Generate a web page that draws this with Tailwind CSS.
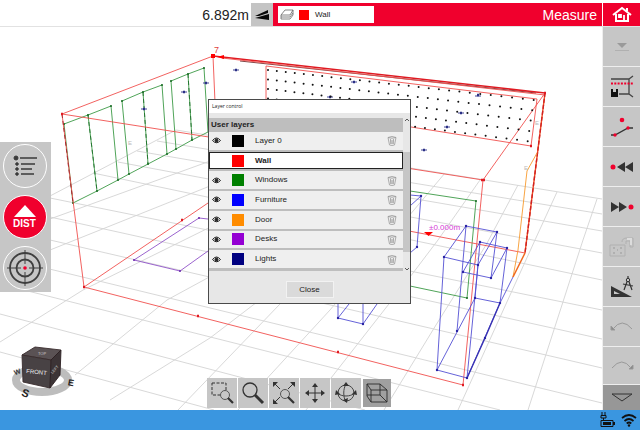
<!DOCTYPE html>
<html lang="en">
<head>
    <meta charset="UTF-8">
    <meta name="viewport" content="width=device-width, initial-scale=1">
    <title>Measure</title>
    <script src="https://cdn.jsdelivr.net/npm/@tailwindcss/browser@4"></script>
</head>
<body class="flex h-screen flex-col overflow-hidden bg-white font-['Liberation_Sans',sans-serif] text-[#222]">

    <!-- Header -->
    <header class="flex h-[27px] shrink-0 border-b border-[#e2e2e2] pt-[3px]">
        <div class="flex w-[251px] items-center justify-end pr-[2px] text-[14px] leading-none">6.892m</div>
        <button class="flex w-[22px] items-center justify-center bg-[#c4c4c4]" aria-label="Slope">
            <svg class="h-[12px] w-[16px]" viewBox="0 0 16 12"><path d="M1 7 14 1v3L5 7zM1 9l14-4v6z" fill="#080808"/></svg>
        </button>
        <div class="flex min-w-0 flex-1 items-center justify-between bg-[#f0002d] pr-[5px] pl-[5px]">
            <button class="flex h-[17px] w-[96px] items-center bg-white pl-[2px] text-[8px] leading-none">
                <svg class="h-[12px] w-[14px]" viewBox="0 0 14 12" fill="none" stroke="#666" stroke-width=".8"><path d="M1 6 5 1h8l-3 5zM1 6v4h9l3-4V1M1 8h9l3-4"/></svg>
                <span class="ml-[5px] size-[10px] bg-[#f00]"></span>
                <span class="ml-[6px]">Wall</span>
            </button>
            <h1 class="text-[14px] leading-none text-white">Measure</h1>
        </div>
        <button class="flex w-[38px] items-center justify-center border-l border-white bg-[#f0002d]" aria-label="Home">
            <svg class="h-[17px] w-[20px]" viewBox="0 0 20 17" fill="none" stroke="#fff" stroke-width="2"><path d="M1 9 10 2l9 7M4 8v7h12V8M15 5V2"/><path d="M7 9h2v2H7zM12 9v6" stroke-width="1.8"/></svg>
        </button>
    </header>

    <main class="flex min-h-0 flex-1">
        <div class="relative min-w-0 flex-1 overflow-hidden">

            <!-- 3D view -->
            <svg class="block h-full w-full" viewBox="0 27 602 383" preserveAspectRatio="xMinYMin slice" fill="none" stroke-width=".9">
                <path stroke="#d4d4d4" d="M176 130 602 199M157 141 602 214M137 151 602 231M118 162 602 253M93 173 602 280M50 198 602 310M50 217 602 339M50 240 602 368M0 257 602 403M0 284 500 410M0 314 365 410M0 352 214 410
                    M50 196 176 130M50 219 260 143M50 250 300 150M0 342 83 290 350 158M75 375 167 300 410 168M110 400 210 338 410 185M178 410 280 304 412 168M238 410 330 310 445 173M306 410 410 277 438 240 480 180M384 410 436 325 486 245 518 185M458 410 535 240 557 192M528 410 583 240 597 199"/>
                <!-- windows -->
                <path stroke="#3c9a46" d="M64 124 88 115 111 106 118 180M88 115 97 191M64 124 73 203 97 191 118 180 129 174 148 164 167 154 176 149 192 140 208 132M122 101 143 92 162 85 167 154M122 101 129 174M143 92 148 164M171 81 188 74 204 68 208 132M171 81 176 149M188 74 192 140M410 191 476 201 467 298 410 286"/>
                <path stroke="#1f6f2b" stroke-dasharray="4 3" d="M88 115 97 191M143 92 148 164M188 74 192 140"/>
                <path stroke="#1f6f2b" stroke-width="2.2" stroke-linecap="round" d="M64 124h0M88 115h0M111 106h0M122 101h0M143 92h0M162 85h0M171 81h0M188 74h0M204 68h0M73 203h0M97 191h0M118 180h0M129 174h0M148 164h0M167 154h0M176 149h0M192 140h0M476 201h0M467 298h0"/>
                <!-- walls -->
                <path stroke="#f0504e" d="M62 114 213 56M62 114 483 180 545 93M62 114 84 287 463 385 483 180M84 287 208 203 219 195 525 253M213 56 219 195M266 66V104L531 146 537 99 266 66"/>
                <path stroke="#a4232b" stroke-dasharray="4 3" d="M62 114 73 203"/>
                <path stroke="#6b3030" d="M240 61 536 93"/>
                <path stroke="#e01a22" stroke-width="1.5" d="M213 56 545 93"/>
                <path stroke="#f0504e" d="M222 58 545 95"/>
                <path stroke="#f04a20" stroke-width="1.4" d="M545 93 525 253"/>
                <path stroke="#d02020" stroke-width="1.4" stroke-dasharray="4 2" d="M545 93 525 253"/>
                <path stroke="#e01a22" stroke-width="2.4" d="M61 114h2M83 287h2M181 220h2M197 316h2M337 352h2M462 385h2M481 180h4M530 146h2M544 93h2"/>
                <path fill="#f00" d="M211 54h4v4h-4zM217 57l7-2v4zM424 232h9l-4.5 4z"/>
                <!-- door -->
                <path stroke="#f79a2e" d="M537 153 527 171 518 250 513 277"/>
                <path stroke="#f06a20" stroke-width="1.5" d="M525 253 513 277"/>
                <!-- desks -->
                <path stroke="#9052c8" d="M208 219 199 218 134 260 180 271 208 251"/>
                <path stroke="#7030b0" stroke-width="2.2" stroke-linecap="round" d="M199 218h0M134 260h0M180 271h0"/>
                <!-- furniture -->
                <path stroke="#5450d4" d="M444 257 478 265 497 232 466 226 444 257 437 370 467 378 478 265M466 226 457 331M497 232 491 278 463 272 480 242 507 248 491 278M480 242 475 298 500 303 507 248M437 370 475 298M467 378 500 303 513 277M410 195 421 196 417 247 410 253M421 196 410 206M338 300V318L363 324V300M338 318 349 304M363 324 377 304"/>
                <path stroke="#3a34b4" stroke-width="1.4" d="M467 378 485 338 500 303"/>
                <path stroke="#2a24a4" stroke-width="2.4" stroke-linecap="round" d="M444 257h0M478 265h0M497 232h0M466 226h0M437 370h0M467 378h0M457 331h0M491 278h0M463 272h0M480 242h0M507 248h0M475 298h0M500 303h0M485 338h0M421 196h0M417 247h0M338 318h0M363 324h0"/>
                <!-- lights -->
                <path stroke="#2a2f86" d="M233 70h6M203 83h6M351 82h6M327 97h6M475 96h6M458 113h6M444 127h6M421 150h6M181 92h6M141 109h6"/>
                <path stroke="#2a2f86" stroke-width="2.6" d="M235 70h2M205 83h2M353 82h2M329 97h2M477 95h2M460 113h2M446 127h2M423 150h2M183 92h2M143 109h2"/>
                <g id="dots" fill="#111"></g>
                <g fill="#bbb" font-size="6"><text x="128" y="145">E</text><text x="535" y="125">E</text><text x="524" y="170">E</text></g>
                <text x="214" y="53" font-size="9" fill="#e0433f">7</text>
                <text x="429" y="230" font-size="8" fill="#d63ad6">±0.000m</text>

                <!-- view cube -->
                <ellipse cx="42" cy="380" rx="26" ry="12" stroke="#bdbdbd" stroke-width="8"/>
                <path fill="#5a5254" stroke="#3a2c2e" d="M22 355 35 347 61 350 51 360z"/>
                <path fill="#484244" stroke="#3a2c2e" d="M22 355 51 360 50 388 23 382z"/>
                <path fill="#3c3436" stroke="#2c2022" d="M51 360 61 350 60 375 50 388z"/>
                <text transform="rotate(6 26 373)" x="26" y="373" font-size="6" fill="#eee">FRONT</text>
                <text x="38" y="355" font-size="4" fill="#ccc">TOP</text>
                <text transform="rotate(-50 54 374)" x="53" y="373" font-size="4" fill="#ccc">LEFT</text>
                <text transform="rotate(-20 18 372)" x="14" y="374" font-size="7" font-weight="bold" fill="#333">W</text>
                <text transform="rotate(20 26 393)" x="22" y="397" font-size="11" font-weight="bold" fill="#222">S</text>
                <text transform="rotate(10 72 383)" x="68" y="386" font-size="9" font-weight="bold" fill="#222">E</text>
            </svg>

            <!-- Left tools -->
            <nav class="absolute top-[115px] left-0 flex w-[51px] flex-col items-center gap-[7px] bg-[#c6c6c6] py-[2px] pr-[2px]">
                <button class="flex size-[44px] items-center justify-center rounded-full border border-white" aria-label="List">
                    <svg class="h-[22px] w-[26px]" viewBox="0 0 26 22" fill="#3a3a3a" stroke="#3a3a3a"><circle cx="4" cy="3" r="2"/><circle cx="5" cy="9" r="1.3"/><circle cx="5" cy="14" r="1.3"/><circle cx="5" cy="19" r="1.3"/><path stroke-width="1.6" d="M8 3h17M9 9h14M9 14h11M9 19h13"/></svg>
                </button>
                <button class="flex size-[44px] flex-col items-center justify-center gap-[2px] rounded-full border border-white bg-[#f0002d] text-[10px] leading-none font-bold text-white">
                    <svg class="h-[12px] w-[22px]" viewBox="0 0 22 12" fill="#fff"><path d="M11 0 22 12H0z"/></svg>
                    DIST
                </button>
                <button class="flex size-[44px] items-center justify-center rounded-full border border-white" aria-label="Target">
                    <svg class="size-[36px]" viewBox="0 0 36 36" fill="none" stroke="#3f3f3f"><circle cx="18" cy="18" r="15" stroke-width="1.8"/><circle cx="18" cy="18" r="8.5" stroke-width="1.8"/><path d="M18 0v14M18 22v14M0 18h14M22 18h14"/><circle cx="18" cy="18" r="1.8" fill="#f0002d" stroke="none"/></svg>
                </button>
            </nav>

            <!-- Layer control -->
            <section class="absolute top-[72px] left-[208px] w-[203px] border border-[#4a4a4a] bg-[#e7e7e7]" role="dialog" aria-labelledby="dialog-title">
                <h2 id="dialog-title" class="h-[13px] bg-white pl-[3px] font-['Open_Sans',sans-serif] text-[5px] leading-[12px]">Layer control</h2>
                <div class="mt-[5px] flex">
                    <div class="min-w-0 flex-1 bg-[#bebebe] pb-[3px]">
                        <h3 class="pl-[2px] text-[8px] leading-[14px] font-bold">User layers</h3>
                        <ul id="layers" class="grid h-[136px] auto-rows-fr gap-[2px]"></ul>
                    </div>
                    <div class="flex w-[7px] flex-col items-center">
                        <svg class="size-[4px]" viewBox="0 0 4 4" fill="none" stroke="#333" stroke-width=".8"><path d="M0 3 2 1l2 2"/></svg>
                        <div class="mt-[30px] w-full grow bg-[#c6c6c6]"></div>
                        <svg class="mt-[15px] size-[4px]" viewBox="0 0 4 4" fill="none" stroke="#333" stroke-width=".8"><path d="M0 1l2 2 2-2"/></svg>
                    </div>
                </div>
                <div class="flex justify-center pt-[10px] pb-[5px]">
                    <button class="h-[17px] w-[48px] border border-[#f2f2f2] bg-[#dadada] text-[8px] leading-none">Close</button>
                </div>
            </section>

            <!-- View tools -->
            <nav class="absolute bottom-[2px] left-[207px] flex items-center gap-px">
                <button class="flex size-[30px] items-center justify-center bg-[#c6c6c6]" aria-label="Zoom window">
                    <svg class="size-[24px]" viewBox="0 0 24 24" fill="none" stroke="#333"><path stroke-dasharray="3 1.5" d="M2 2h14v12H2z"/><circle cx="15" cy="14" r="4.500" fill="#c6c6c6" stroke="#555"/><path d="m18 17 5 5" stroke-width="2.2"/></svg>
                </button>
                <button class="flex size-[30px] items-center justify-center bg-[#c6c6c6]" aria-label="Zoom">
                    <svg class="size-[24px]" viewBox="0 0 24 24" fill="none" stroke="#333"><circle cx="9" cy="9" r="7" stroke-width="1.3"/><path d="m14 14 8 8" stroke-width="3"/></svg>
                </button>
                <button class="flex size-[30px] items-center justify-center bg-[#c6c6c6]" aria-label="Zoom extents">
                    <svg class="size-[24px]" viewBox="0 0 24 24" fill="none" stroke="#333"><path d="m2 2 6 6M22 2l-6 6M2 22l6-6"/><circle cx="13" cy="13" r="4.5" stroke="#555"/><path d="m16 16 6 6" stroke-width="2.2"/><path stroke="none" fill="#333" d="M1 1h5L1 6zM23 1h-5l5 5zM1 23v-5l5 5z"/></svg>
                </button>
                <button class="flex size-[30px] items-center justify-center bg-[#c6c6c6]" aria-label="Pan">
                    <svg class="size-[24px]" viewBox="0 0 24 24" fill="#333" stroke="#333"><path d="M12 4v16M4 12h16"/><path stroke="none" d="m12 2 3 4H9zM12 22l3-4H9zM2 12l4-3v6zM22 12l-4-3v6z"/></svg>
                </button>
                <button class="flex size-[30px] items-center justify-center bg-[#c6c6c6]" aria-label="Orbit">
                    <svg class="size-[24px]" viewBox="0 0 24 24" fill="none" stroke="#444"><circle cx="12" cy="12" r="8"/><path d="M12 3C9 8 9 16 12 21M3 12c5 4 13 4 18 0"/><path stroke="none" fill="#333" d="m12 1 3 4H9zM13 22l-4-3 5-2zM1 14l1-5 4 4zM23 14l-1-5-4 4z"/></svg>
                </button>
                <button class="ml-px flex size-[28px] items-center justify-center bg-[#a0a0a0]" aria-label="Perspective">
                    <svg class="size-[24px]" viewBox="0 0 24 24" fill="none" stroke="#2a2a2a" stroke-width=".9"><path d="M2 3h13l7 6v12H6L2 15zM2 3l4 6h16M6 9v12M15 3v11H2M15 14l7 7"/></svg>
                </button>
            </nav>
        </div>

        <!-- Right tools -->
        <aside class="flex w-[38px] shrink-0 flex-col gap-px bg-[#eee] pl-px *:flex *:items-center *:justify-center">
            <button class="h-[39px] bg-[#c6c6c6]" aria-label="Up">
                <svg class="h-[10px] w-[16px]" viewBox="0 0 16 10"><path d="M3 1h10L8 6z" fill="#9a9a9a"/><path d="M1 8.5h14" stroke="#b0b0b0"/></svg>
            </button>
            <button class="h-[39px] bg-[#c6c6c6]" aria-label="Room scan">
                <svg class="h-[24px] w-[24px]" viewBox="0 0 24 24" fill="none" stroke="#444" stroke-width="1.3"><path d="M1 4h18v15H9M19 4l4-3M19 19l4 3"/><path d="M1 8.500h22" stroke="#f0002d" stroke-width="2" stroke-dasharray="2 1.3"/><path d="M1 14h2v3h3v-3h2v8H1z" fill="#111" stroke="none"/></svg>
            </button>
            <button class="h-[39px] bg-[#c6c6c6]" aria-label="Point to line">
                <svg class="h-[20px] w-[24px]" viewBox="0 0 24 20"><path d="M1 18h4l13-7h5" fill="none" stroke="#333" stroke-width="1.3"/><g fill="#f0002d"><circle cx="12" cy="3" r="2.3"/><circle cx="5" cy="18" r="1.700"/><circle cx="18" cy="11" r="1.7"/></g></svg>
            </button>
            <button class="h-[39px] bg-[#c6c6c6]" aria-label="Previous point">
                <svg class="h-[10px] w-[24px]" viewBox="0 0 24 10"><circle cx="3" cy="5" r="2.5" fill="#f0002d"/><path d="M15 0v10L7 5zM23 0v10l-8-5z" fill="#333"/></svg>
            </button>
            <button class="h-[39px] bg-[#c6c6c6]" aria-label="Next point">
                <svg class="h-[10px] w-[24px]" viewBox="0 0 24 10"><circle cx="21" cy="5" r="2.5" fill="#f0002d"/><path d="M9 0v10l8-5zM1 0v10l8-5z" fill="#333"/></svg>
            </button>
            <button class="h-[39px] bg-[#c6c6c6]" aria-label="Relocate">
                <svg class="h-[22px] w-[26px]" viewBox="0 0 26 22" fill="none" stroke="#b0b0b0"><path d="M1 9h15v11H1zM13 6q0-4 5-4h6v9h-3V5h-4v3"/><path fill="#dcdcdc" stroke="none" d="M18 2h5v7h-2V4h-3z"/><path d="M4 12h2M11 12h2M4 17h2M11 17h2M8 14h1" stroke="#999"/></svg>
            </button>
            <button class="h-[39px] bg-[#c6c6c6]" aria-label="Drawing tools">
                <svg class="h-[24px] w-[24px]" viewBox="0 0 24 24" fill="none" stroke="#333"><path d="M1 11v11h21zM4 16v3h6z" fill="#333" fill-rule="evenodd" stroke="none"/><path d="M18 4l-4 11M18 4l4 11M13 9l10 2M18 1v2" stroke-width="1.2"/><circle cx="18" cy="5" r="1.7" fill="#c6c6c6"/></svg>
            </button>
            <button class="h-[39px] bg-[#c6c6c6]" aria-label="Undo">
                <svg class="h-[12px] w-[24px]" viewBox="0 0 24 12" fill="none" stroke="#999"><path d="M3 8Q12-4 22 8"/><path d="M1 9V5l4 4z" fill="#888"/></svg>
            </button>
            <button class="h-[37px] bg-[#c6c6c6]" aria-label="Redo">
                <svg class="h-[12px] w-[24px]" viewBox="0 0 24 12" fill="none" stroke="#999"><path d="M2 8Q12-4 21 8"/><path d="M23 9V5l-4 4z" fill="#888"/></svg>
            </button>
            <button class="flex-1 bg-[#979797]" aria-label="More">
                <svg class="h-[10px] w-[24px]" viewBox="0 0 24 10" fill="none" stroke="#333"><path d="M2 1h20L12 8z"/></svg>
            </button>
        </aside>
    </main>

    <!-- Status bar -->
    <footer class="flex h-[20px] shrink-0 items-center justify-end gap-[6px] bg-[#3a96e0] pr-[3px]">
        <svg class="h-[16px] w-[15px]" viewBox="0 0 15 16" fill="none" stroke="#111"><path d="M2 0v3M5 0v3M1 3.500h5V6H1zM3.500 6v2" /><path d="M1 8.500h12v6H1z"/><path d="M3 10h8v3H3zM13 10h2v3h-2z" fill="#111" stroke="none"/></svg>
        <svg class="h-[14px] w-[16px]" viewBox="0 0 16 14" fill="none" stroke="#111" stroke-width="1.7"><path d="M1 5q7-6 14 0M3.500 8q4.500-4 9 0M5.700 10.500q2.300-2 4.600 0"/><circle cx="8" cy="12.500" r="1.2" fill="#111" stroke="none"/></svg>
    </footer>

    <script>
        const layers = [
            { name: 'Layer 0', color: '#000000' },
            { name: 'Wall', color: '#ff0000', active: true },
            { name: 'Windows', color: '#008000' },
            { name: 'Furniture', color: '#0000ff' },
            { name: 'Door', color: '#ff8c00' },
            { name: 'Desks', color: '#9400d3' },
            { name: 'Lights', color: '#000080' },
        ];

        const eye = '<svg class="h-[7px] w-[9px]" viewBox="0 0 9 7" fill="none" stroke="#222"><path d="M.5 3.5Q4.5-1.500 8.5 3.5 4.5 8 .5 3.5z"/><circle cx="4.5" cy="3.5" r="1.5" fill="#222"/></svg>';
        const trash = '<svg class="h-[11px] w-[10px]" viewBox="0 0 10 11" fill="none" stroke="#999" stroke-width=".8"><path d="M1 2.500Q5 .5 9 2.500 5 4 1 2.500zM1 2.500 2.500 10Q5 11 7.500 10L9 2.500M3.500 4l.5 5M6.500 4 6 9M3 6h4M3 8h4"/></svg>';

        document.getElementById('layers').innerHTML = layers.map(layer => `
            <li class="flex min-h-0 items-center pr-[6px] text-[8px] leading-none ${layer.active ? 'border border-[#222] bg-white pl-[2px] font-bold' : 'bg-[#efefef] pl-[3px]'}">
                <button class="flex w-[9px] justify-center" aria-label="Toggle ${layer.name}">${layer.active ? '' : eye}</button>
                <span class="ml-[11px] size-[12px]" style="background:${layer.color}"></span>
                <span class="ml-[11px] flex-1">${layer.name}</span>
                ${layer.active ? '' : `<button aria-label="Delete ${layer.name}">${trash}</button>`}
            </li>`).join('');

        // ceiling points, spacing widens towards the viewer
        let dots = '';
        for (let row = 0; row < 5; row++) {
            for (let col = 0; col < 28; col++) {
                const t = col / 27;
                const x = 268 + 8.8 * col + 0.0385 * col * col - row * 1.5 * t;
                const y = 70 + row * 9.5 + (30 + row) * (x - 268) / 266;
                dots += `<circle cx="${x}" cy="${y}" r="1"/>`;
            }
        }
        document.getElementById('dots').innerHTML = dots;
    </script>
</body>
</html>
